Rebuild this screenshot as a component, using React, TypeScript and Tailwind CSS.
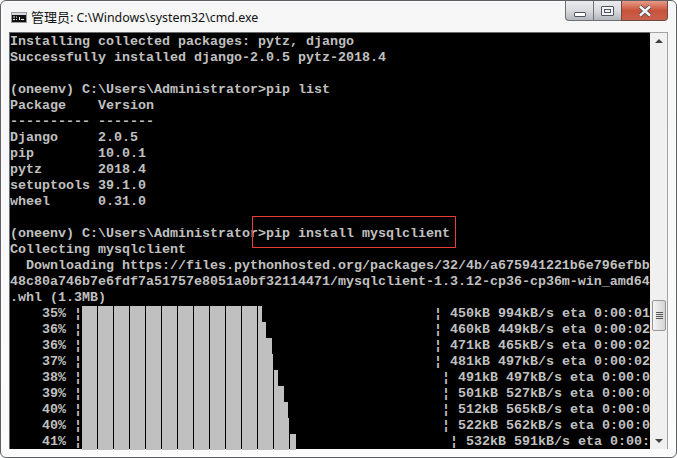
const lines = [
  "Installing collected packages: pytz, django",
  "Successfully installed django-2.0.5 pytz-2018.4",
  "",
  "(oneenv) C:\\Users\\Administrator>pip list",
  "Package    Version",
  "---------- -------",
  "Django     2.0.5",
  "pip        10.0.1",
  "pytz       2018.4",
  "setuptools 39.1.0",
  "wheel      0.31.0",
  "",
];

const after = [
  "Collecting mysqlclient",
  "  Downloading https://files.pythonhosted.org/packages/32/4b/a675941221b6e796efbb",
  "48c80a746b7e6fdf7a51757e8051a0bf32114471/mysqlclient-1.3.12-cp36-cp36m-win_amd64",
  ".whl (1.3MB)",
];

// end = right edge of the last block, track = room before the closing bar char
const rows = [
  { pct: "35%", end: 180, track: 352, tail: " 450kB 994kB/s eta 0:00:01" },
  { pct: "36%", end: 184, track: 352, tail: " 460kB 449kB/s eta 0:00:02" },
  { pct: "36%", end: 190, track: 352, tail: " 471kB 465kB/s eta 0:00:02" },
  { pct: "37%", end: 191, track: 352, tail: " 481kB 497kB/s eta 0:00:02" },
  { pct: "38%", end: 196, track: 360, tail: " 491kB 497kB/s eta 0:00:0" },
  { pct: "39%", end: 202, track: 360, tail: " 501kB 527kB/s eta 0:00:0" },
  { pct: "40%", end: 206, track: 360, tail: " 512kB 565kB/s eta 0:00:0" },
  { pct: "40%", end: 207, track: 360, tail: " 522kB 562kB/s eta 0:00:0" },
  { pct: "41%", end: 214, track: 368, tail: " 532kB 591kB/s eta 0:00:" },
];

function Line({ text }: { text: string }) {
  return <div className="h-4 whitespace-pre">{text}</div>;
}

function ProgressRow({ pct, end, track, tail }: { pct: string; end: number; track: number; tail: string }) {
  const blocks: number[] = [];
  for (let x = 0; x < end; x += 16) blocks.push(Math.min(15, end - x));
  return (
    <div className="flex h-4 whitespace-pre">
      <span className="w-[72px] shrink-0">{`    ${pct} ¦`}</span>
      <div className="flex h-4 shrink-0 gap-px" style={{ width: track }}>
        {blocks.map((w, i) => (
          <div key={i} className="h-4 shrink-0 bg-[#c0c0c0]" style={{ width: w }} />
        ))}
      </div>
      <span>{`¦${tail}`}</span>
    </div>
  );
}

function CmdIcon() {
  return (
    <svg width="16" height="11" viewBox="0 0 16 11" className="shrink-0">
      <rect x="0" y="0" width="16" height="11" fill="#9a9a9a" />
      <rect x="1" y="1" width="14" height="2" fill="#d8d8e0" />
      <rect x="1" y="3" width="14" height="7" fill="#111111" />
      <path d="M2 4.5h2v1H2zM2 7h2v1H2zM5 4.5h1v1H5zM5 7h1v1H5zM8 5h1v3H8zM10 7h3v1h-3z" fill="#e8e8e8" />
    </svg>
  );
}

function Caption() {
  return (
    <div className="flex h-5 shrink-0">
      <div className="flex w-7 items-end justify-center rounded-bl-[4px] border border-t-0 border-r-0 border-[#6e7176] bg-gradient-to-b from-[#e9ebee] via-[#d9dbdf] to-[#b4b7bc] pb-[3px]">
        <div className="h-[5px] w-[12px] rounded-[1px] border border-[#4d5560] bg-white" />
      </div>
      <div className="flex w-7 items-center justify-center border border-t-0 border-r-0 border-[#6e7176] bg-gradient-to-b from-[#e9ebee] via-[#d9dbdf] to-[#b4b7bc]">
        <div className="flex h-[10px] w-[13px] items-center justify-center rounded-[1px] border border-[#4d5560] bg-[#f2f3f4]">
          <div className="h-1 w-[7px] border border-[#4d5560]" />
        </div>
      </div>
      <div className="flex w-[47px] items-center justify-center rounded-br-[4px] border border-t-0 border-[#6e4a42] bg-gradient-to-b from-[#e69a88] via-[#c9523a] to-[#c8604c]">
        <svg width="16" height="12" viewBox="0 0 16 12">
          <path d="M3 1.5l10 9M13 1.5l-10 9" fill="none" stroke="#3c4650" strokeWidth="4" />
          <path d="M3 1.5l10 9M13 1.5l-10 9" fill="none" stroke="#f4f5f6" strokeWidth="2.4" />
        </svg>
      </div>
    </div>
  );
}

function Scrollbar() {
  return (
    <div className="flex w-[18px] shrink-0 flex-col border-r border-t border-[#a3a3a3] bg-[#f0f0f0]">
      <div className="flex h-4 items-center justify-center">
        <div className="h-0 w-0 border-x-[4px] border-b-[4px] border-x-transparent border-b-[#404040]" />
      </div>
      <div className="h-[251px]" />
      <div className="ml-[2px] flex h-[31px] w-[14px] items-center justify-center rounded-[2px] border border-[#979797] bg-gradient-to-r from-[#f4f4f4] to-[#d4d4d4]">
        <div className="flex flex-col gap-px">
          <div className="h-px w-[7px] bg-[#555555]" />
          <div className="h-px w-[7px] bg-[#555555]" />
          <div className="h-px w-[7px] bg-[#555555]" />
          <div className="h-px w-[7px] bg-[#555555]" />
        </div>
      </div>
      <div className="flex-1" />
      <div className="flex h-[17px] items-center justify-center">
        <div className="h-0 w-0 border-x-[4px] border-t-[4px] border-x-transparent border-t-[#404040]" />
      </div>
    </div>
  );
}

export default function App() {
  return (
    <div className="h-[458px] w-[677px] overflow-hidden bg-white">
      <div className="flex h-full flex-col rounded-[6px] border border-[#5c5f63] bg-gradient-to-b from-[#f6f6f6] to-[#fbfbfb] shadow-[inset_0_0_0_1px_#ffffff]">
        <div className="flex h-[31px] shrink-0 items-start justify-between pl-[10px] pr-[8px]">
          <div className="flex items-center gap-[4px] pt-[7px]">
            <CmdIcon />
            <span className="font-['Noto_Sans','Noto_Sans_CJK_SC',sans-serif] text-[12.4px] leading-[18px] text-[#111111]">
              <span className="mr-[3px] text-[13px]">管理员:</span>C:\Windows\system32\cmd.exe
            </span>
          </div>
          <Caption />
        </div>
        <div className="flex h-[417px] shrink-0 pl-[8px] pr-[8px]">
          <div className="h-full w-[641px] border-l border-t border-[#6b6b6b] bg-black pt-px font-['Liberation_Mono',monospace] text-[13.33px] font-bold leading-4 text-[#c0c0c0]">
            {lines.map((t, i) => (
              <Line key={i} text={t} />
            ))}
            <div className="relative h-4 whitespace-pre">
              {"(oneenv) C:\\Users\\Administrator>pip install mysqlclient"}
              <div className="absolute left-[242px] top-[-10px] h-[32px] w-[204px] border border-[#f03a3a]" />
            </div>
            {after.map((t, i) => (
              <Line key={i} text={t} />
            ))}
            {rows.map((r, i) => (
              <ProgressRow key={i} {...r} />
            ))}
          </div>
          <Scrollbar />
        </div>
      </div>
    </div>
  );
}
